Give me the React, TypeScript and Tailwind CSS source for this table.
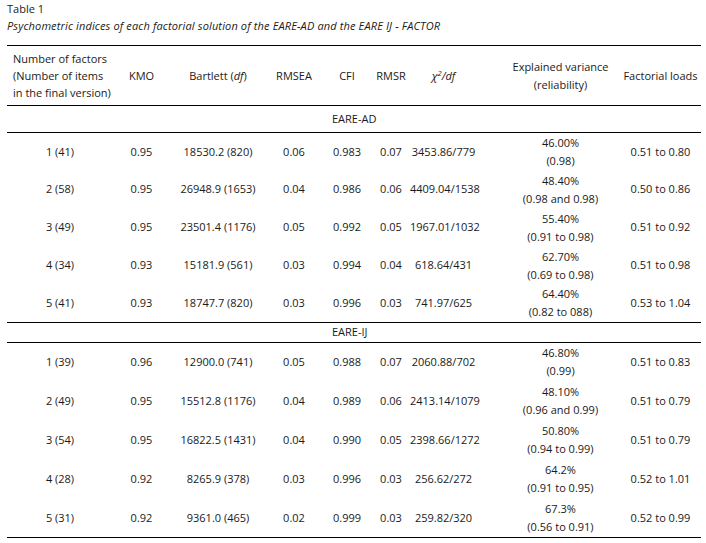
const AD = [
  ["1 (41)", "0.95", "18530.2 (820)", "0.06", "0.983", "0.07", "3453.86/779", "46.00%", "(0.98)", "0.51 to 0.80"],
  ["2 (58)", "0.95", "26948.9 (1653)", "0.04", "0.986", "0.06", "4409.04/1538", "48.40%", "(0.98 and 0.98)", "0.50 to 0.86"],
  ["3 (49)", "0.95", "23501.4 (1176)", "0.05", "0.992", "0.05", "1967.01/1032", "55.40%", "(0.91 to 0.98)", "0.51 to 0.92"],
  ["4 (34)", "0.93", "15181.9 (561)", "0.03", "0.994", "0.04", "618.64/431", "62.70%", "(0.69 to 0.98)", "0.51 to 0.98"],
  ["5 (41)", "0.93", "18747.7 (820)", "0.03", "0.996", "0.03", "741.97/625", "64.40%", "(0.82 to 088)", "0.53 to 1.04"],
];

const IJ = [
  ["1 (39)", "0.96", "12900.0 (741)", "0.05", "0.988", "0.07", "2060.88/702", "46.80%", "(0.99)", "0.51 to 0.83"],
  ["2 (49)", "0.95", "15512.8 (1176)", "0.04", "0.989", "0.06", "2413.14/1079", "48.10%", "(0.96 and 0.99)", "0.51 to 0.79"],
  ["3 (54)", "0.95", "16822.5 (1431)", "0.04", "0.990", "0.05", "2398.66/1272", "50.80%", "(0.94 to 0.99)", "0.51 to 0.79"],
  ["4 (28)", "0.92", "8265.9 (378)", "0.03", "0.996", "0.03", "256.62/272", "64.2%", "(0.91 to 0.95)", "0.52 to 1.01"],
  ["5 (31)", "0.92", "9361.0 (465)", "0.02", "0.999", "0.03", "259.82/320", "67.3%", "(0.56 to 0.91)", "0.52 to 0.99"],
];

function DataRow({ r, tall }: { r: string[]; tall?: boolean }) {
  return (
    <tr className={tall ? "h-[39px]" : "h-[38px]"}>
      <td className="text-center">{r[0]}</td>
      <td className="text-center">{r[1]}</td>
      <td className="text-center">{r[2]}</td>
      <td className="text-center">{r[3]}</td>
      <td className="text-center">{r[4]}</td>
      <td className="text-center">{r[5]}</td>
      <td className="text-center">{r[6]}</td>
      <td className="pl-[24px] text-center leading-[18px]">
        {r[7]}
        <br />
        {r[8]}
      </td>
      <td className="text-center">{r[9]}</td>
    </tr>
  );
}

export default function App() {
  return (
    <div
      className="h-[543px] w-[706px] bg-white px-[7px] text-[11px] text-[#1a1a1a]"
      style={{ fontFamily: '"Open Sans", sans-serif' }}
    >
      <div className="pt-[1px] leading-[16px]">Table 1</div>
      <div className="italic leading-[18px] tracking-[0.14px]">
        Psychometric indices of each factorial solution of the EARE-AD and the EARE IJ - FACTOR
      </div>
      <table className="mt-[10px] w-[694px] table-fixed border-collapse">
        <colgroup>
          <col className="w-[106px]" />
          <col className="w-[57px]" />
          <col className="w-[96px]" />
          <col className="w-[56px]" />
          <col className="w-[50px]" />
          <col className="w-[38px]" />
          <col className="w-[67px]" />
          <col className="w-[143px]" />
          <col className="w-[81px]" />
        </colgroup>
        <thead>
          <tr className="h-[60px] border-y border-black leading-[17px]">
            <th className="pl-[6px] text-left font-normal">
              Number of factors
              <br />
              (Number of items
              <br />
              in the final version)
            </th>
            <th className="font-normal">KMO</th>
            <th className="font-normal">
              Bartlett (<i>df</i>)
            </th>
            <th className="font-normal">RMSEA</th>
            <th className="font-normal">CFI</th>
            <th className="font-normal">RMSR</th>
            <th className="font-normal italic">
              χ<sup className="text-[8px]">2</sup>/df
            </th>
            <th className="pl-[24px] font-normal leading-[18px]">
              Explained variance
              <br />
              (reliability)
            </th>
            <th className="font-normal">Factorial loads</th>
          </tr>
        </thead>
        <tbody>
          <tr className="h-[27px] border-b border-black">
            <td colSpan={9} className="pl-[325px]">
              EARE-AD
            </td>
          </tr>
          {AD.map((r) => (
            <DataRow key={r[0]} r={r} />
          ))}
          <tr className="h-[20px] border-y border-black">
            <td colSpan={9} className="pl-[325px]">
              EARE-IJ
            </td>
          </tr>
          {IJ.map((r) => (
            <DataRow key={r[0]} r={r} tall />
          ))}
          <tr className="h-0 border-t border-black" />
        </tbody>
      </table>
    </div>
  );
}
